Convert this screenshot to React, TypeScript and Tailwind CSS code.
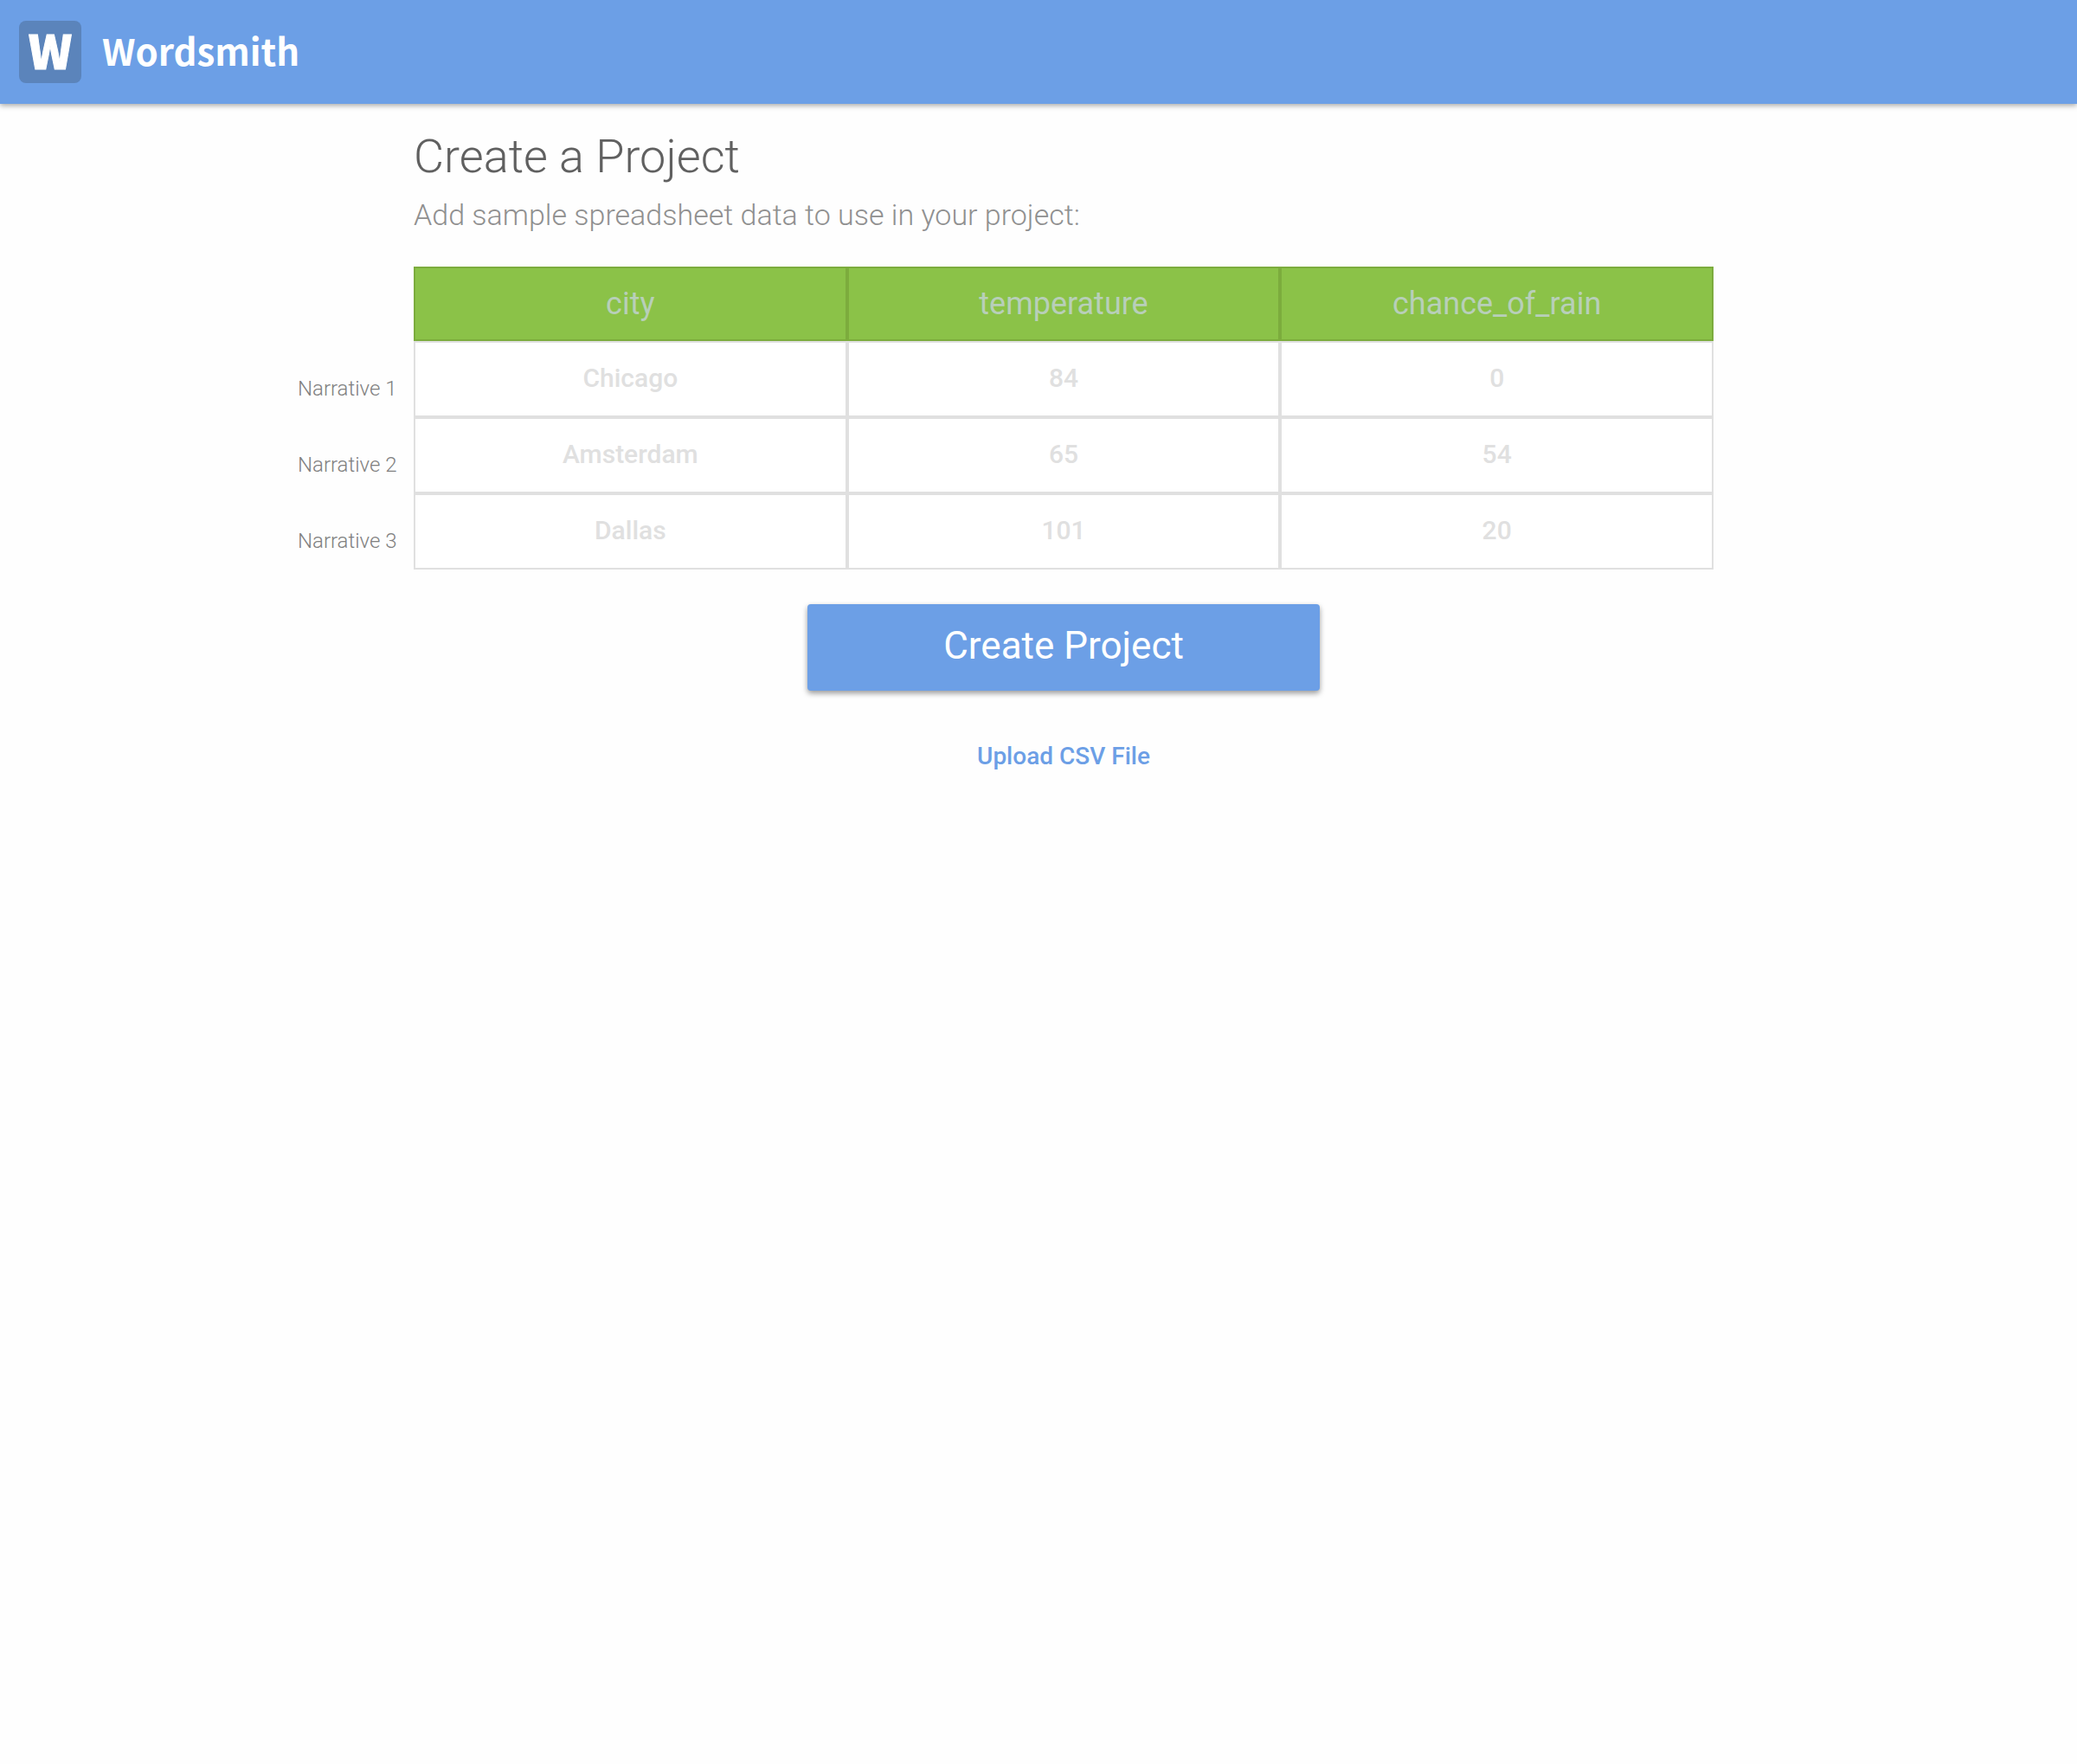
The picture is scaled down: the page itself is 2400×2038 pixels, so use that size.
const columns = ["city", "temperature", "chance_of_rain"];

const rows = [
  ["Chicago", "84", "0"],
  ["Amsterdam", "65", "54"],
  ["Dallas", "101", "20"],
];

function Header() {
  return (
    <header className="flex h-[120px] items-center bg-[#6c9fe6] px-[22px] shadow-[0_2px_6px_rgba(0,0,0,0.35)]">
      <a
        href="#"
        className="flex items-center gap-6 font-['Noto_Sans_CJK_SC','Open_Sans',sans-serif] font-bold text-white"
      >
        <span
          aria-hidden="true"
          className="flex size-[72px] items-center justify-center rounded-lg bg-[#5b84bb] pb-1.5 text-[54px] leading-[66px] font-black [-webkit-text-stroke:1px_white]"
        >
          W
        </span>
        <span className="pb-1 text-[42px] leading-[68px]">Wordsmith</span>
      </a>
    </header>
  );
}

function DataTable() {
  return (
    <table className="w-full table-fixed border-separate border-spacing-0">
      <colgroup>
        <col className="w-[134px]" />
        <col />
        <col />
        <col />
      </colgroup>
      <thead>
        <tr>
          <td />
          {columns.map((name) => (
            <th key={name} scope="col" className="border-2 border-[#7cac3d] bg-[#8bc248] p-0">
              <input
                type="text"
                aria-label={`Column name ${name}`}
                placeholder={name}
                className="block h-[82px] w-full text-center text-[36px] font-normal text-white outline-none placeholder:text-[#b8cfb9]"
              />
            </th>
          ))}
        </tr>
      </thead>
      <tbody>
        {rows.map((row, r) => (
          <tr key={row[0]}>
            <th
              scope="row"
              className="p-0 pt-[22px] text-left align-middle text-[24px] leading-8 font-light whitespace-nowrap text-[#808080]"
            >
              Narrative {r + 1}
            </th>
            {row.map((value, c) => (
              <td key={columns[c]} className="border-2 border-[#e0e0e0] bg-white p-0">
                <input
                  type="text"
                  aria-label={`${columns[c]}, narrative ${r + 1}`}
                  placeholder={value}
                  className="block h-[84px] w-full pb-1 text-center text-[30px] font-medium text-[#606060] outline-none placeholder:text-[#e0e0e0]"
                />
              </td>
            ))}
          </tr>
        ))}
      </tbody>
    </table>
  );
}

export default function App() {
  return (
    <div className="min-h-screen bg-[#fefefe] font-['Roboto',sans-serif]">
      <Header />
      <main className="mx-auto max-w-[1712px] pr-[76px]">
        <form onSubmit={(event) => event.preventDefault()}>
          <div className="pt-7 pl-[134px]">
            <h1 className="text-[54px] leading-[66px] font-light text-[#606060]">Create a Project</h1>
            <p className="mt-3 mb-[38px] text-[34px] leading-[44px] font-light text-[#909090]">
              Add sample spreadsheet data to use in your project:
            </p>
          </div>
          <DataTable />
          <div className="flex flex-col items-center pt-10 pl-[134px]">
            <button
              type="submit"
              className="h-[100px] w-[592px] rounded-[4px] bg-[#6c9fe6] pb-1 text-[44px] text-white shadow-[0_3px_6px_rgba(0,0,0,0.4)]"
            >
              Create Project
            </button>
            <a href="#" className="mt-14 text-[28px] leading-10 font-medium text-[#6c9fe6]">
              Upload CSV File
            </a>
          </div>
        </form>
      </main>
    </div>
  );
}
